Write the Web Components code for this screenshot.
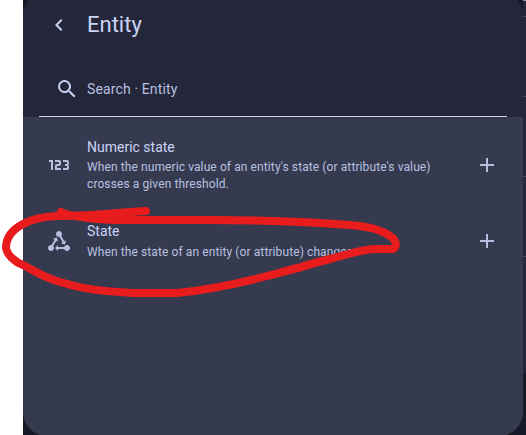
<!DOCTYPE html>
<html lang="en"><head><meta charset="utf-8"><title>Entity</title>
<style>
html,body{margin:0;height:100%;overflow:hidden;background:#fff}
body{font-family:Roboto,"Liberation Sans",sans-serif;color:#cad3f5;--header:#24273a;--surface:#363a4f;--secondary:#b8c0e0}
</style></head><body>
<entity-page></entity-page>
<script>
const icons={
back:'M15.41,16.58L10.83,12L15.41,7.41L14,6L8,12L14,18L15.41,16.58Z',
search:'M9.5,3A6.5,6.5 0 0,1 16,9.5C16,11.11 15.41,12.59 14.44,13.73L14.71,14H15.5L20.5,19L19,20.5L14,15.5V14.71L13.73,14.44C12.59,15.41 11.11,16 9.5,16A6.5,6.5 0 0,1 3,9.5A6.5,6.5 0 0,1 9.5,3M9.5,5C7,5 5,7 5,9.5C5,12 7,14 9.5,14C12,14 14,12 14,9.5C14,7 12,5 9.5,5Z',
numeric:'M4,17V9H2V7H6V17H4M22,15C22,16.11 21.1,17 20,17H16V15H20V13H18V11H20V9H16V7H20A2,2 0 0,1 22,9V10.5A1.5,1.5 0 0,1 20.5,12A1.5,1.5 0 0,1 22,13.5V15M14,15V17H8V13C8,11.89 8.9,11 10,11H12V9H8V7H12A2,2 0 0,1 14,9V11C14,12.11 13.1,13 12,13H10V15H14Z',
state:'M6.27 17.05C6.72 17.58 7 18.25 7 19C7 20.66 5.66 22 4 22S1 20.66 1 19 2.34 16 4 16C4.18 16 4.36 16 4.53 16.05L7.6 10.69L5.86 9.7L9.95 8.58L11.07 12.67L9.33 11.68L6.27 17.05M20 16C18.7 16 17.6 16.84 17.18 18H11V16L8 19L11 22V20H17.18C17.6 21.16 18.7 22 20 22C21.66 22 23 20.66 23 19S21.66 16 20 16M12 8C12.18 8 12.36 8 12.53 7.95L15.6 13.31L13.86 14.3L17.95 15.42L19.07 11.33L17.33 12.32L14.27 6.95C14.72 6.42 15 5.75 15 5C15 3.34 13.66 2 12 2S9 3.34 9 5 10.34 8 12 8Z',
plus:'M19,13H13V19H11V13H5V11H11V5H13V11H19V13Z'};
function define(name,html){
 customElements.define(name,class extends HTMLElement{
  constructor(){super();this.attachShadow({mode:'open'}).innerHTML=html}
 });
}
customElements.define('mdi-icon',class extends HTMLElement{
 constructor(){super();this.attachShadow({mode:'open'})}
 connectedCallback(){this.shadowRoot.innerHTML=`<style>:host{display:block;width:24px;height:24px;flex:none}svg{display:block;fill:currentColor}</style><svg width="24" height="24" viewBox="0 0 24 24"><path d="${icons[this.getAttribute('name')]}"/></svg>`}
});
define('dialog-header',`<style>:host{display:flex;align-items:center;height:49px;padding-left:24px;gap:16px;font-size:22px;line-height:28px}</style><mdi-icon name="back"></mdi-icon><slot></slot>`);
define('search-field',`<style>:host{display:flex;align-items:center;box-sizing:border-box;height:56px;margin:12px 16px 0;padding-left:16px;gap:8px;border-bottom:1px solid #cad3f5;font-size:14px;letter-spacing:.13px}span{color:var(--secondary)}</style><mdi-icon name="search"></mdi-icon><span><slot></slot></span>`);
define('option-row',`<style>:host{display:flex;align-items:center;padding:0 24px;gap:16px;color:var(--secondary)}.text{flex:1}.title{font-size:14px;line-height:20px;color:#cad3f5}.sub{font-size:12px;line-height:17px;letter-spacing:.1px;max-width:352px;margin-top:2.6px}slot[name=icon]{display:block}</style><slot name="icon"></slot><div class="text"><div class="title"><slot name="title"></slot></div><div class="sub"><slot></slot></div></div><mdi-icon name="plus"></mdi-icon>`);
define('entity-dialog',`<style>:host{display:block;box-sizing:border-box;width:500px;height:444px;margin-top:-8px;padding-top:8px;border-radius:24px;overflow:hidden;background:linear-gradient(var(--header) 125px,var(--surface) 125px)}.list{padding-top:19px}option-row{height:58px}option-row+option-row{height:52px;margin-top:21px}</style>
<dialog-header>Entity</dialog-header><search-field>Search · Entity</search-field>
<div class="list"><option-row><mdi-icon slot="icon" name="numeric"></mdi-icon><span slot="title">Numeric state</span>When the numeric value of an entity's state (or attribute's value) crosses a given threshold.</option-row>
<option-row><mdi-icon slot="icon" name="state"></mdi-icon><span slot="title">State</span>When the state of an entity (or attribute) changes.</option-row></div>`);
define('page-edge',`<style>:host{display:grid;grid-template-rows:16px 80px 80px 80px 117px 1fr;width:3px;background:#24273a}i{border-top:1px solid #494d64}i:first-child,i:last-child{border:0;background:#181926}i:nth-child(2){border-color:#9299b5}</style><i></i><i></i><i></i><i></i><i></i><i></i>`);
define('red-scribble',`<style>:host{position:absolute;inset:0;pointer-events:none}svg{display:block}</style><svg width="526" height="435" fill="none" stroke="#e81c1c" stroke-width="8" stroke-linecap="round" stroke-linejoin="round"><path d="M146 211C119 212 104 216 57 216C34 217 6 226 6 248C7 255 15 262 23 265C35 271 45 278 60 282C82 289 100 291 133 293H177C215 289 240 283 267 276C279 273 289 270 300 267.500C310 264 320 261.500 330 259C346 255 361 249.500 375 249H393C398 247 396 239 390 236C379 228 363 226 350 225C315 222 258 220 210 220H120C105 220 86 218 75 216C69 215 65 214 61 212"/></svg>`);
define('entity-page',`<style>:host{display:flex;position:relative;width:526px;height:435px;overflow:hidden}.back{margin-left:23px;width:500px;height:435px;background:#181926}</style><div class="back"><entity-dialog></entity-dialog></div><page-edge></page-edge><red-scribble></red-scribble>`);
</script></body></html>
